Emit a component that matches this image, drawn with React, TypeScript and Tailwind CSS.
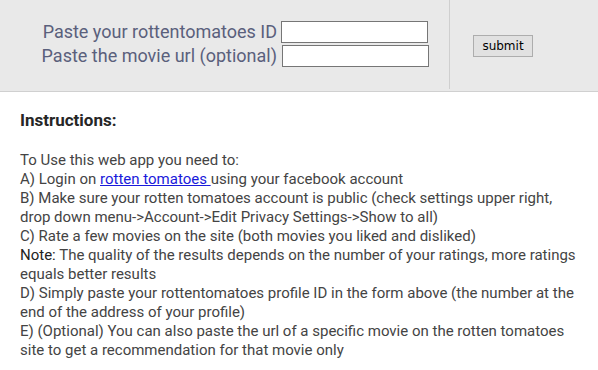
import React from 'react';

export default function App() {
  return (
    <div className="w-[598px] h-[370px] bg-white font-['Roboto',sans-serif] overflow-hidden">
      <div className="flex h-[92px] bg-[#e9e9e9] border-b border-[#d0d0d0]">
        <div className="w-[450px] h-[89px] border-r border-[#cfcfcf] flex items-center justify-end pr-[20px]">
          <div className="grid grid-cols-[auto_auto] items-center gap-x-[4px] gap-y-[2px] -mt-[2px]">
            <span className="text-[18px] leading-[22px] text-[#5a607c] text-right">Paste your rottentomatoes ID</span>
            <input className="w-[147px] h-[22px] bg-white border border-[#767676]" />
            <span className="text-[18px] leading-[22px] text-[#5a607c] text-right">Paste the movie url (optional)</span>
            <input className="w-[147px] h-[22px] bg-white border border-[#767676] ml-[1px]" />
          </div>
        </div>
        <div className="flex-1 pl-[23px] pt-[33px]">
          <button className="h-[22px] w-[60px] bg-[#e1e1e1] border border-[#adadad] text-[12px] text-black font-['DejaVu_Sans',sans-serif] leading-none">
            submit
          </button>
        </div>
      </div>
      <div className="px-[20px] pt-[17px] text-[15px] leading-[19px] text-[#444]">
        <h2 className="text-[17px] leading-[22px] font-bold text-[#262626]">Instructions:</h2>
        <div className="mt-[20px]">
          <p>To Use this web app you need to:</p>
          <p>
            A) Login on{' '}
            <a href="#" className="text-[#1a1adb] underline">
              rotten tomatoes{' '}
            </a>
            using your facebook account
          </p>
          <p>
            B) Make sure your rotten tomatoes account is public (check settings upper right, drop down
            menu-&gt;Account-&gt;Edit Privacy Settings-&gt;Show to all)
          </p>
          <p>C) Rate a few movies on the site (both movies you liked and disliked)</p>
          <p>
            <span className="text-[#222]">Note:</span> The quality of the results depends on the number of
            your ratings, more ratings equals better results
          </p>
          <p>
            D) Simply paste your rottentomatoes profile ID in the form above (the number at the end of the
            address of your profile)
          </p>
          <p>
            E) (Optional) You can also paste the url of a specific movie on the rotten tomatoes site to get a
            recommendation for that movie only
          </p>
        </div>
      </div>
    </div>
  );
}
